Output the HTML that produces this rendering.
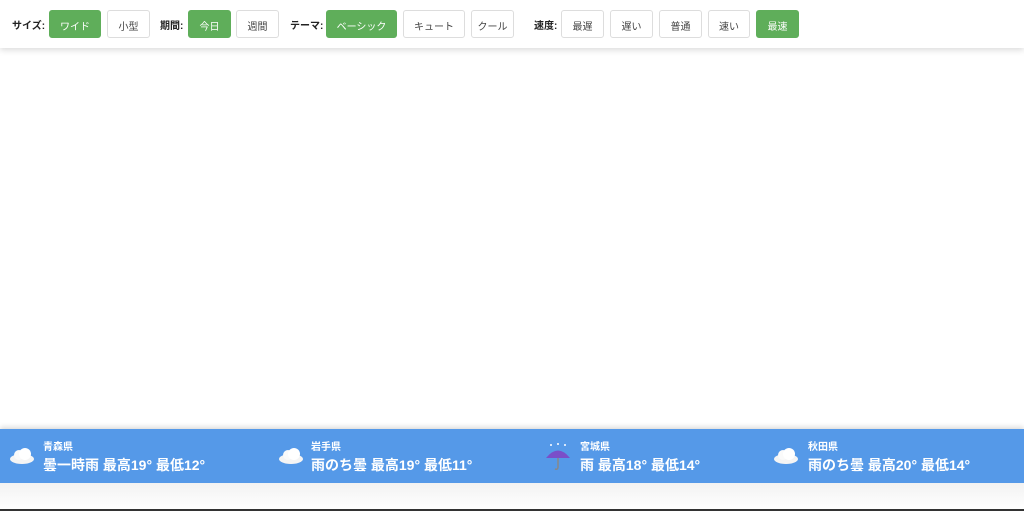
<!DOCTYPE html>
<html><head><meta charset="utf-8"><style>
*{margin:0;padding:0;box-sizing:border-box}
body{width:1024px;height:511px;background:#fff;position:relative;overflow:hidden;font-family:"Liberation Sans","Noto Sans CJK JP",sans-serif}
.hdr{position:absolute;left:0;top:0;width:1024px;height:48px;background:#fff;box-shadow:0 2px 6px rgba(0,0,0,.15)}
.l{position:absolute;top:17px;font-size:10px;font-weight:bold;color:#222}
.b{position:absolute;top:10px;height:28px;border:1px solid #ddd;border-radius:3px;background:#fff;color:#444;font-size:10px;display:flex;align-items:center;justify-content:center;padding-top:2px}
.g{background:#5fae5a;border-color:#5fae5a;color:#fff}
.bar{position:absolute;left:0;top:429px;width:1024px;height:54px;background:#5599e8;box-shadow:0 -2px 5px rgba(0,0,0,.15)}
.it{position:absolute;top:0;color:#fff}
.it .p{position:absolute;top:9px;font-size:10px;font-weight:bold;white-space:nowrap}
.it .w{position:absolute;top:26px;font-size:14px;font-weight:bold;white-space:nowrap}
.ic{position:absolute;top:16px}
.bot{position:absolute;left:0;top:483px;width:1024px;height:28px;background:linear-gradient(#f2f2f2,#fff);border-bottom:2px solid #333}
</style></head><body>
<div class="hdr">
<span class="l" style="left:12px">サイズ:</span>
<div class="b g" style="left:49px;width:52px">ワイド</div>
<div class="b" style="left:107px;width:43px">小型</div>
<span class="l" style="left:160px">期間:</span>
<div class="b g" style="left:188px;width:43px">今日</div>
<div class="b" style="left:236px;width:43px">週間</div>
<span class="l" style="left:290px">テーマ:</span>
<div class="b g" style="left:326px;width:71px">ベーシック</div>
<div class="b" style="left:403px;width:62px">キュート</div>
<div class="b" style="left:471px;width:43px">クール</div>
<span class="l" style="left:534px">速度:</span>
<div class="b" style="left:561px;width:43px">最遅</div>
<div class="b" style="left:610px;width:43px">遅い</div>
<div class="b" style="left:659px;width:43px">普通</div>
<div class="b" style="left:708px;width:42px">速い</div>
<div class="b g" style="left:756px;width:43px">最速</div>
</div>
<div class="bar">
<svg class="ic" style="left:8px" width="28" height="20"><ellipse cx="14" cy="14" rx="12" ry="5" fill="#f4f4f4"/><circle cx="11" cy="10" r="5" fill="#fafafa"/><circle cx="17" cy="9" r="6" fill="#fff"/></svg>
<div class="it"><span class="p" style="left:43px">青森県</span><span class="w" style="left:43px">曇一時雨 最高19° 最低12°</span></div>
<svg class="ic" style="left:277px" width="28" height="20"><ellipse cx="14" cy="14" rx="12" ry="5" fill="#f4f4f4"/><circle cx="11" cy="10" r="5" fill="#fafafa"/><circle cx="17" cy="9" r="6" fill="#fff"/></svg>
<div class="it"><span class="p" style="left:311px">岩手県</span><span class="w" style="left:311px">雨のち曇 最高19° 最低11°</span></div>
<svg class="ic" style="left:545px;top:12px" width="26" height="30"><path d="M1 17 Q13 2 25 17 Z" fill="#7a4fc9"/><path d="M13 17 V26 Q13 29 10 28" stroke="#888" stroke-width="1.5" fill="none"/><circle cx="6" cy="4" r="1" fill="#fff"/><circle cx="13" cy="3" r="1" fill="#fff"/><circle cx="20" cy="4" r="1" fill="#fff"/></svg>
<div class="it"><span class="p" style="left:580px">宮城県</span><span class="w" style="left:580px">雨 最高18° 最低14°</span></div>
<svg class="ic" style="left:772px" width="28" height="20"><ellipse cx="14" cy="14" rx="12" ry="5" fill="#f4f4f4"/><circle cx="11" cy="10" r="5" fill="#fafafa"/><circle cx="17" cy="9" r="6" fill="#fff"/></svg>
<div class="it"><span class="p" style="left:808px">秋田県</span><span class="w" style="left:808px">雨のち曇 最高20° 最低14°</span></div>
</div>
<div class="bot"></div>
</body></html>
